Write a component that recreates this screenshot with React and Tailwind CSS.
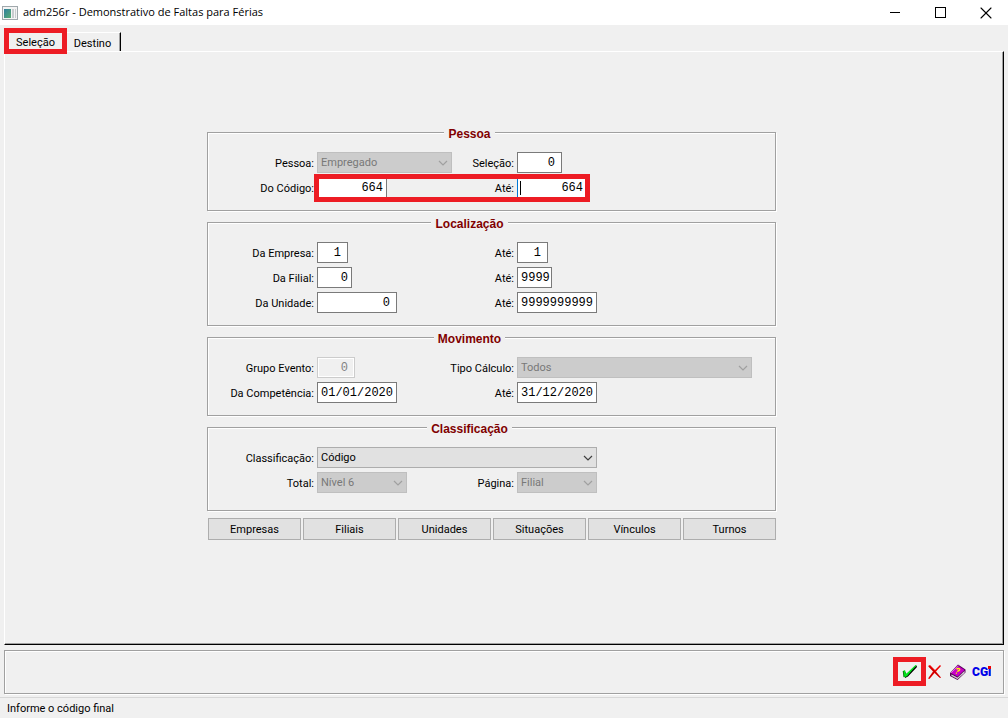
import React, { useState } from 'react';
import { X } from 'lucide-react';

const tabs = ['Seleção', 'Destino'];

const filters = ['Empresas', 'Filiais', 'Unidades', 'Situações', 'Vínculos', 'Turnos'];

const Label = ({ htmlFor, children }) => (
  <label htmlFor={htmlFor} className="h-[21px] text-right whitespace-nowrap leading-[23px]">
    {children}
  </label>
);

const Field = ({ id, value, disabled, className = '' }) => (
  <input
    id={id}
    type="text"
    defaultValue={value}
    disabled={disabled}
    className={`h-[21px] border border-[#7a7a7a] bg-white pl-[3px] font-['Liberation_Mono',monospace] text-xs text-black outline-none focus:border-[#0078d7] disabled:border-[#cccccc] disabled:bg-[#f0f0f0] disabled:text-[#838383] disabled:shadow-[inset_0_0_0_1px_#fff] ${className}`}
  />
);

const Select = ({ id, value, disabled, className = '' }) => (
  <div className={`relative h-[21px] ${className}`}>
    <select
      id={id}
      disabled={disabled}
      defaultValue={value}
      className="block h-full w-full appearance-none border border-[#adadad] bg-[#e1e1e1] pt-0.5 pl-[3px] text-black opacity-100 outline-none disabled:border-[#bfbfbf] disabled:bg-[#cccccc] disabled:text-[#787878]"
    >
      <option>{value}</option>
    </select>
    <svg
      className={`pointer-events-none absolute top-2 right-1 h-[6px] w-[10px] ${disabled ? 'text-[#a0a0a0]' : 'text-[#404040]'}`}
      viewBox="0 0 10 6"
      fill="none"
      stroke="currentColor"
      strokeWidth="1.2"
    >
      <path d="M1 1l4 4 4-4" />
    </svg>
  </div>
);

const Group = ({ title, className = 'pb-3', children }) => (
  <fieldset
    className={`min-w-0 border border-[#a0a0a0] pt-2.5 pr-11 shadow-[1px_1px_0_#fff,inset_1px_1px_0_#fff] ${className}`}
  >
    <legend className="mx-auto bg-[#f0f0f0] px-1 pt-1 font-['Liberation_Sans',sans-serif] text-xs leading-4 font-bold text-[#800000]">
      {title}
    </legend>
    <div className="relative grid grid-cols-[106px_130px_64px_minmax(0,1fr)] gap-x-[3px] gap-y-1">
      {children}
    </div>
  </fieldset>
);

const CheckIcon = () => (
  <svg width="16" height="16" viewBox="0 0 16 16">
    <path d="M3 7.500l1.500 2.500L14.500 1.500 15 3 6 12.500 3 14z" fill="#000" />
    <path d="M1 7l2-1 1 4L13.500 1h1.200L5 12.200 1.800 13.500z" fill="#00e81c" />
    <path d="M1.200 7l.8 6" stroke="#006000" strokeWidth=".8" fill="none" />
  </svg>
);

const CancelIcon = () => (
  <svg width="16" height="16" viewBox="0 0 16 16">
    <path d="M1 2l2-1 5 5 5-5 1 1-5 5.500 5 6-1 .5-5.500-5-5 6-1.500-.5 5-7z" fill="#f00000" />
    <path d="M2 2.500l6 5.500 5 5.500M2.500 13.500l5-6" stroke="#900000" strokeWidth=".6" fill="none" />
  </svg>
);

const HelpBookIcon = () => (
  <svg width="18" height="18" viewBox="0 0 18 18">
    <path d="M1 10l8-8.500 7.500 5v3L8.500 17 1 13z" fill="#580058" />
    <path d="M2.500 11.500l6 3.300L15.500 8v1.800L8.500 16 2.500 12.800z" fill="#fff" />
    <path d="M3 12.500l5.500 2.800 6.500-6" stroke="#909090" strokeWidth=".5" fill="none" />
    <path d="M2 10l7-7.300 6.500 4.300-7 6.500z" fill="#c800c8" />
    <path d="M2.200 9.800l7-7.300" stroke="#ff90ff" strokeWidth=".8" />
    <path d="M7.500 6.200c1.500-1.400 4-.4 3 1-.6.8-1.800.5-2.200 1.400M7 9.800l.8.500" stroke="#ffff00" strokeWidth="1.400" fill="none" />
  </svg>
);

const CgiLogo = () => (
  <svg width="19" height="16" viewBox="0 0 19 16">
    <text x="0" y="12" className="fill-[#0000e8] font-['Roboto',sans-serif] text-xs font-black">
      CGi
    </text>
    <rect x="16" y="2" width="3" height="3" fill="#f00000" />
  </svg>
);

const WindowIcon = () => (
  <svg width="16" height="14" viewBox="0 0 16 14">
    <defs>
      <linearGradient id="pane" x1="0" y1="0" x2="1" y2="1">
        <stop offset="0" stopColor="#2f7f9f" />
        <stop offset="1" stopColor="#58ad70" />
      </linearGradient>
    </defs>
    <rect x=".5" y=".5" width="15" height="13" fill="#f4f4f4" stroke="#a0a8ac" />
    <rect x="2" y="3" width="7" height="9" fill="url(#pane)" />
    <path d="M10 3h2v9h-2zM13 3h1v9h-1z" fill="#c8cccf" />
  </svg>
);

const App = () => {
  const [activeTab, setActiveTab] = useState('Seleção');

  return (
    <div className="flex min-h-screen flex-col bg-[#f0f0f0] font-['Roboto',sans-serif] text-[11px] text-black">
      {/* Title bar */}
      <header className="flex h-[25px] items-center bg-white pl-0.5">
        <WindowIcon />
        <h1 className="ml-[5px] flex-1 font-['Open_Sans',sans-serif] text-[11px]">
          adm256r - Demonstrativo de Faltas para Férias
        </h1>
        <button aria-label="Minimizar" className="flex h-full w-[46px] items-center justify-center">
          <span className="h-px w-2.5 bg-black" />
        </button>
        <button aria-label="Maximizar" className="flex h-full w-[45px] items-center justify-center">
          <span className="size-[11px] border border-black" />
        </button>
        <button aria-label="Fechar" className="flex h-full w-[45px] items-center justify-center">
          <X size={20} strokeWidth={1.3} />
        </button>
      </header>

      {/* Tabs */}
      <nav className="flex h-[26px] items-end px-1" role="tablist">
        {tabs.map((tab) => (
          <button
            key={tab}
            role="tab"
            aria-selected={activeTab === tab}
            onClick={() => setActiveTab(tab)}
            className={
              activeTab === tab
                ? 'relative -mb-[3px] h-[26px] w-[63px] border-5 border-[#ed1c24] pt-0.5 leading-4'
                : 'h-[19px] w-[54px] border-t border-r border-t-white border-r-black pt-[3px] pr-0.5 shadow-[inset_-1px_0_0_#a0a0a0]'
            }
          >
            {tab}
          </button>
        ))}
      </nav>

      <main className="mx-1 flex-1 border border-t-white border-r-black border-b-black border-l-white pt-[70px] pr-[25px] shadow-[inset_-1px_-1px_0_#a0a0a0]">
        <form className="mx-auto max-w-[569px]" onSubmit={(e) => e.preventDefault()}>
          <div className="flex flex-col gap-px">
            <Group title="Pessoa">
              <Label htmlFor="pessoa">Pessoa:</Label>
              <Select id="pessoa" value="Empregado" disabled className="w-[135px]" />
              <Label htmlFor="selecao">Seleção:</Label>
              <Field id="selecao" value="0" className="w-[45px] pr-1.5 text-right" />

              <Label htmlFor="codigoDe">Do Código:</Label>
              <Field id="codigoDe" value="664" className="w-[70px] pr-[3px] text-right" />
              <Label htmlFor="codigoAte">Até:</Label>
              <div className="relative h-[21px]">
                <Field id="codigoAte" value="664" className="w-[70px] border-l-[#0078d7] pr-[3px] text-right" />
                <span className="absolute top-1 left-[3px] h-[14px] w-px bg-black" />
              </div>
              <span className="pointer-events-none absolute top-[22px] left-[106px] h-7 w-[276px] border-5 border-[#ed1c24]" />
            </Group>

            <Group title="Localização">
              <Label htmlFor="empresaDe">Da Empresa:</Label>
              <Field id="empresaDe" value="1" className="w-[31px] pr-1.5 text-right" />
              <Label htmlFor="empresaAte">Até:</Label>
              <Field id="empresaAte" value="1" className="w-[31px] pr-1.5 text-right" />

              <Label htmlFor="filialDe">Da Filial:</Label>
              <Field id="filialDe" value="0" className="w-[35px] pr-[3px] text-right" />
              <Label htmlFor="filialAte">Até:</Label>
              <Field id="filialAte" value="9999" className="w-[35px]" />

              <Label htmlFor="unidadeDe">Da Unidade:</Label>
              <Field id="unidadeDe" value="0" className="w-20 pr-1.5 text-right" />
              <Label htmlFor="unidadeAte">Até:</Label>
              <Field id="unidadeAte" value="9999999999" className="w-20" />
            </Group>

            <Group title="Movimento">
              <Label htmlFor="grupoEvento">Grupo Evento:</Label>
              <Field id="grupoEvento" value="0" disabled className="w-[38px] pr-1.5 text-right" />
              <Label htmlFor="tipoCalculo">Tipo Cálculo:</Label>
              <Select id="tipoCalculo" value="Todos" disabled className="w-[235px]" />

              <Label htmlFor="competenciaDe">Da Competência:</Label>
              <Field id="competenciaDe" value="01/01/2020" className="w-20" />
              <Label htmlFor="competenciaAte">Até:</Label>
              <Field id="competenciaAte" value="31/12/2020" className="w-20" />
            </Group>

            <Group title="Classificação" className="pb-[17px]">
              <Label htmlFor="classificacao">Classificação:</Label>
              <Select id="classificacao" value="Código" className="col-span-3 w-[280px]" />

              <Label htmlFor="total">Total:</Label>
              <Select id="total" value="Nível 6" disabled className="w-[90px]" />
              <Label htmlFor="pagina">Página:</Label>
              <Select id="pagina" value="Filial" disabled className="w-20" />
            </Group>
          </div>

          <div className="mt-[7px] grid grid-cols-6 gap-0.5 pl-px">
            {filters.map((name) => (
              <button key={name} type="button" className="h-[22px] border border-[#adadad] bg-[#e1e1e1] pt-0.5">
                {name}
              </button>
            ))}
          </div>
        </form>
      </main>

      {/* Action bar */}
      <div className="mx-1 mt-[5px] flex h-11 items-center justify-end border border-[#a0a0a0] pr-3 pb-px shadow-[1px_1px_0_#fff,inset_1px_1px_0_#fff]">
        <button aria-label="Confirmar" className="flex h-[29px] w-[33px] items-center justify-center border-5 border-[#ed1c24]">
          <CheckIcon />
        </button>
        <button aria-label="Cancelar" className="ml-px">
          <CancelIcon />
        </button>
        <button aria-label="Ajuda" className="ml-1.5">
          <HelpBookIcon />
        </button>
        <button aria-label="Sobre" className="ml-[5px]">
          <CgiLogo />
        </button>
      </div>

      {/* Status bar */}
      <footer className="mt-[3px] h-[21px] border-t border-[#d7d7d7] pl-[7px] leading-[21px]">
        Informe o código final
      </footer>
    </div>
  );
};

export default App;
